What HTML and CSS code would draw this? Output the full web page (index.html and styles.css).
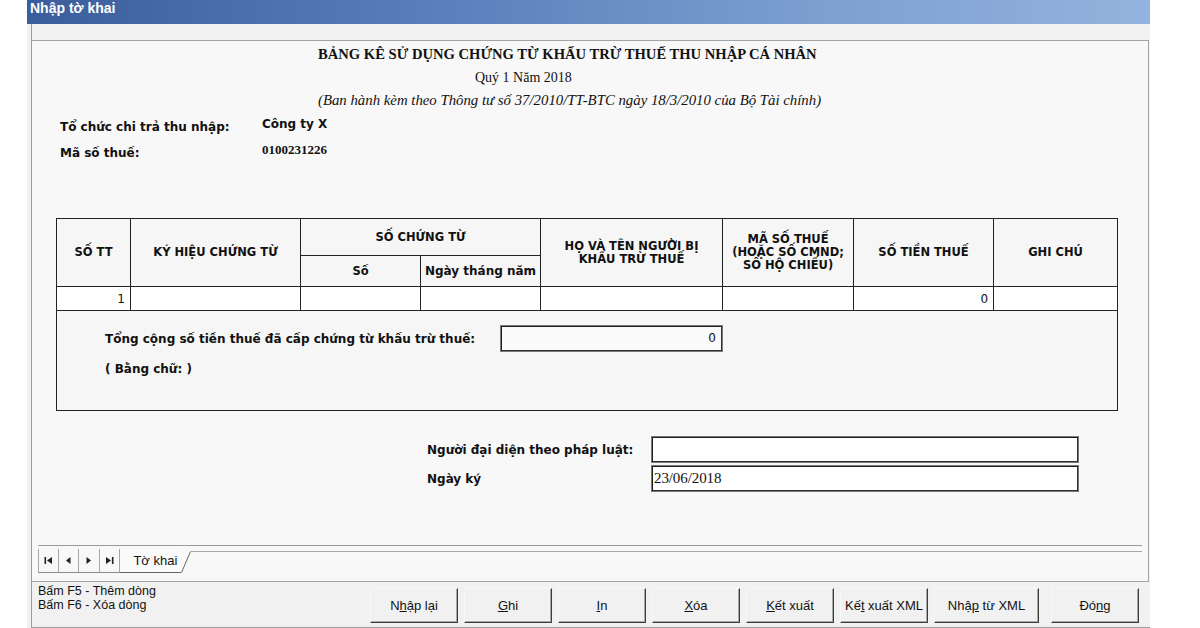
FILE: index.html
```html
<!DOCTYPE html>
<html lang="vi">
<head>
<meta charset="utf-8">
<title>Nhập tờ khai</title>
<link rel="stylesheet" href="styles.css">
</head>
<body>
<div class="window">
  <div class="titlebar">Nhập tờ khai</div>
  <div class="frame">
    <div class="panel">
      <div class="doc-head">
        <div class="doc-title">BẢNG KÊ SỬ DỤNG CHỨNG TỪ KHẤU TRỪ THUẾ THU NHẬP CÁ NHÂN</div>
        <div class="doc-period">Quý 1 Năm 2018</div>
        <div class="doc-note">(Ban hành kèm theo Thông tư số 37/2010/TT-BTC ngày 18/3/2010 của Bộ Tài chính)</div>
      </div>
      <div class="payer">
        <div class="payer-row"><span class="payer-label">Tổ chức chi trả thu nhập:</span><span class="payer-value">Công ty X</span></div>
        <div class="payer-row"><span class="payer-label">Mã số thuế:</span><span class="payer-value payer-value--num">0100231226</span></div>
      </div>
      <table class="grid">
        <colgroup>
          <col class="c-stt"><col class="c-kh"><col class="c-so"><col class="c-ngay"><col class="c-ten"><col class="c-mst"><col class="c-tien"><col class="c-gc">
        </colgroup>
        <thead>
          <tr class="hrow1">
            <th rowspan="2">SỐ TT</th>
            <th rowspan="2">KÝ HIỆU CHỨNG TỪ</th>
            <th colspan="2">SỐ CHỨNG TỪ</th>
            <th rowspan="2">HỌ VÀ TÊN NGƯỜI BỊ<br>KHẤU TRỪ THUẾ</th>
            <th rowspan="2">MÃ SỐ THUẾ<br>(HOẶC SỐ CMND;<br>SỐ HỘ CHIẾU)</th>
            <th rowspan="2">SỐ TIỀN THUẾ</th>
            <th rowspan="2">GHI CHÚ</th>
          </tr>
          <tr class="hrow2">
            <th>Số</th>
            <th class="th-mixed">Ngày tháng năm</th>
          </tr>
        </thead>
        <tbody>
          <tr class="drow">
            <td class="num">1</td><td></td><td></td><td></td><td></td><td></td><td class="num">0</td><td></td>
          </tr>
          <tr class="sumrow">
            <td colspan="8">
              <div class="sum-line">
                <span class="sum-label">Tổng cộng số tiền thuế đã cấp chứng từ khấu trừ thuế:</span>
                <div class="field field--sum">0</div>
              </div>
              <div class="sum-words">( Bằng chữ: )</div>
            </td>
          </tr>
        </tbody>
      </table>
      <div class="sign">
        <div class="sign-row"><span class="sign-label">Người đại diện theo pháp luật:</span><div class="field field--sign"></div></div>
        <div class="sign-row"><span class="sign-label">Ngày ký</span><div class="field field--sign field--date">23/06/2018</div></div>
      </div>
      <div class="tabstrip">
        <div class="tabnav">
          <span class="tabnav-btn"><svg width="9" height="9" viewBox="0 0 9 9"><rect x="0.5" y="1" width="1.6" height="7" fill="#222"/><polygon points="8,1 3,4.5 8,8" fill="#222"/></svg></span>
          <span class="tabnav-btn"><svg width="9" height="9" viewBox="0 0 9 9"><polygon points="6.5,1 2,4.5 6.5,8" fill="#222"/></svg></span>
          <span class="tabnav-btn"><svg width="9" height="9" viewBox="0 0 9 9"><polygon points="2.5,1 7,4.5 2.5,8" fill="#222"/></svg></span>
          <span class="tabnav-btn"><svg width="9" height="9" viewBox="0 0 9 9"><polygon points="1,1 6,4.5 1,8" fill="#222"/><rect x="6.9" y="1" width="1.6" height="7" fill="#222"/></svg></span>
        </div>
        <div class="tab">Tờ khai</div>
        <svg class="tab-slant" width="10" height="24" viewBox="0 0 10 24"><line x1="0.5" y1="23.5" x2="9.5" y2="2.5" stroke="#666" stroke-width="1"/></svg>
        <div class="tab-rest"></div>
      </div>
    </div>
    <div class="statusbar">
      <div class="hints">
        <div>Bấm F5 - Thêm dòng</div>
        <div>Bấm F6 - Xóa dòng</div>
      </div>
      <div class="buttons">
        <button class="btn">N<u>h</u>ập lại</button>
        <button class="btn"><u>G</u>hi</button>
        <button class="btn"><u>I</u>n</button>
        <button class="btn"><u>X</u>óa</button>
        <button class="btn"><u>K</u>ết xuất</button>
        <button class="btn">Kế<u>t</u> xuất XML</button>
        <button class="btn btn--wide">Nhậ<u>p</u> từ XML</button>
        <button class="btn btn--close">Đó<u>n</u>g</button>
      </div>
    </div>
  </div>
</div>
</body>
</html>
```

FILE: styles.css
```css
* { box-sizing: border-box; }
html, body { margin: 0; padding: 0; }
body {
  width: 1200px;
  height: 628px;
  overflow: hidden;
  background: #ffffff;
  font-family: "DejaVu Sans", "Noto Sans", sans-serif;
  color: #111;
}

.window {
  margin-left: 27px;
  width: 1123px;
  height: 628px;
  display: flex;
  flex-direction: column;
  background: #f1f1f1;
}

.titlebar {
  flex: none;
  height: 24px;
  line-height: 24px;
  padding-left: 3px;
  background: linear-gradient(to right, #3b5d9b 0%, #587dba 35%, #7c9fd0 70%, #94b3de 100%);
  color: #fff;
  font: bold 14px "Liberation Sans", Arial, sans-serif;
}

.frame {
  flex: 1;
  min-height: 0;
  margin-left: 4px;
  border-left: 1px solid #9c9c9c;
  border-bottom: 1px solid #a0a0a0;
  display: flex;
  flex-direction: column;
}

.panel {
  flex: none;
  margin-top: 16px;
  margin-right: 1px;
  height: 542px;
  border: 1px solid #a4a4a4;
  border-left: none;
  background: #f8f8f8;
  display: flex;
  flex-direction: column;
}

/* document heading */
.doc-head { margin-top: 2px; }
.doc-title, .doc-period, .doc-note {
  line-height: 23px;
  font-family: "Liberation Serif", "Times New Roman", serif;
  font-size: 14px;
  white-space: nowrap;
}
.doc-title { padding-left: 286px; font-weight: bold; font-size: 14.6px; }
.doc-period { padding-left: 443px; }
.doc-note { padding-left: 286px; font-style: italic; font-size: 14.8px; }

/* payer info */
.payer { margin-top: 2px; padding-left: 28px; }
.payer-row { display: flex; align-items: center; height: 26px; }
.payer-label { width: 202px; font-weight: bold; font-size: 12px; }
.payer-value { font-weight: bold; font-size: 12px; padding-bottom: 6px; }
.payer-value--num { font-family: "Liberation Serif", serif; font-size: 13px; }

/* grid */
.grid {
  margin-top: 52px;
  margin-left: 24px;
  width: 1061px;
  border-collapse: collapse;
  table-layout: fixed;
  border: 1px solid #222;
}
.c-stt { width: 74px; }
.c-kh { width: 170px; }
.c-so { width: 120px; }
.c-ngay { width: 120px; }
.c-ten { width: 182px; }
.c-mst { width: 131px; }
.c-tien { width: 140px; }
.c-gc { width: 124px; }

.grid th, .grid td {
  border: 1px solid #222;
  padding: 0;
}
.grid th {
  font-weight: bold;
  font-size: 11.5px;
  line-height: 13px;
  text-align: center;
  vertical-align: middle;
  background: #f6f6f6;
}
.grid th.th-mixed { font-size: 12px; }
.hrow1 { height: 37px; }
.hrow2 { height: 31px; }
.drow { height: 24px; }
.drow td { background: #fff; font-size: 12px; }
.drow td.num { text-align: right; padding-right: 5px; }

.sumrow { height: 100px; }
.sumrow td { vertical-align: top; background: #f6f6f6; padding: 14px 0 0 48px; }
.sum-line { display: flex; align-items: center; }
.sum-label { width: 395px; font-weight: bold; font-size: 12px; }
.sum-words { margin-top: 7px; line-height: 20px; font-weight: bold; font-size: 12px; }

.field {
  background: #fff;
  border: 1px solid #7a7a7a;
  box-shadow: inset 1px 1px 0 #1e1e1e, inset -1px -1px 0 #2e2e2e;
}
.field--sum {
  width: 223px;
  height: 27px;
  line-height: 25px;
  text-align: right;
  padding-right: 6px;
  font-size: 12px;
  background: #fafafa;
}

/* signature */
.sign { margin-top: 25px; padding-left: 395px; display: flex; flex-direction: column; gap: 2px; }
.sign-row { display: flex; align-items: center; }
.sign-label { width: 224px; font-weight: bold; font-size: 12px; }
.field--sign { width: 428px; height: 27px; }
.field--date {
  font-family: "Liberation Serif", serif;
  font-size: 15px;
  line-height: 25px;
  padding-left: 2px;
  letter-spacing: -0.1px;
}

/* sheet tabs */
.tabstrip {
  margin: auto 6px 8px;
  border-top: 1px solid #9a9a9a;
  padding-top: 3px;
  height: 28px;
  display: flex;
}
.tabnav { display: flex; }
.tabnav-btn {
  width: 20.6px;
  height: 24px;
  display: flex;
  align-items: center;
  justify-content: center;
  border-right: 1px solid #a6a6a6;
  border-bottom: 1px solid #8a8a8a;
}
.tabnav-btn:first-child { border-left: 1px solid #a6a6a6; }
.tab {
  width: 61px;
  height: 24px;
  padding-left: 13px;
  font: 13px "Liberation Sans", Arial, sans-serif;
  line-height: 23px;
  border-bottom: 1px solid #666;
  background: #fafafa;
}
.tab-slant { flex: none; display: block; }
.tab-rest { flex: 1; margin-top: 2px; border-top: 1px solid #a6a6a6; }

/* status bar */
.statusbar {
  flex: 1;
  display: flex;
  padding: 2px 11px 0 6px;
}
.hints {
  font: 12.5px "Liberation Sans", Arial, sans-serif;
  line-height: 14px;
}
.buttons {
  margin-left: auto;
  margin-top: 4px;
  display: flex;
  gap: 6px;
  align-self: flex-start;
}
.btn {
  width: 88px;
  height: 35px;
  padding: 0;
  background: #f1f1f1;
  border: 1px solid;
  border-color: #f8f8f8 #3c3c3c #3c3c3c #f8f8f8;
  box-shadow: inset -1px -1px 0 #a8a8a8;
  font: 13px "Liberation Sans", Arial, sans-serif;
  color: #111;
}
.btn--wide { width: 105px; }
.btn--close { margin-left: 6px; }
```
